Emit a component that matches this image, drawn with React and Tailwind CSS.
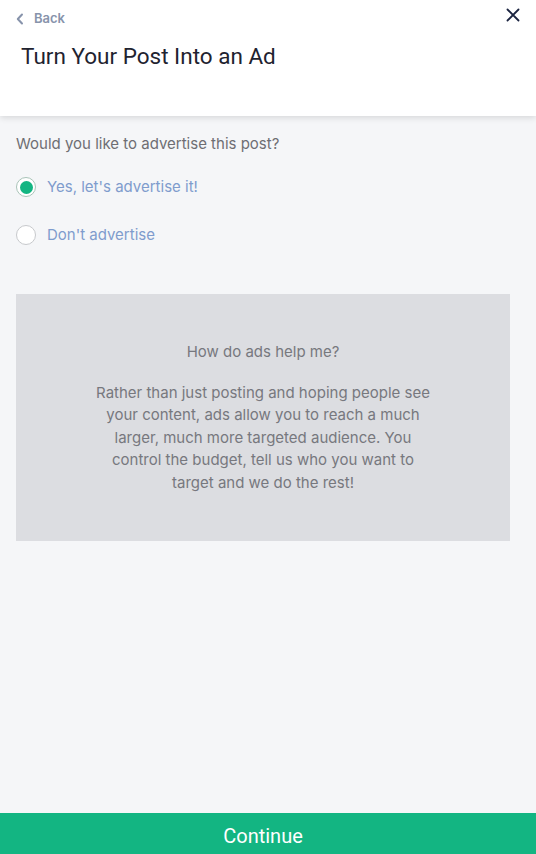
import { useState } from "react";

export default function App() {
  const [choice, setChoice] = useState("yes");

  return (
    <div className="flex flex-col h-[854px] w-[536px] bg-[#f5f6f8] font-['Inter',sans-serif] overflow-hidden">
      {/* HEADER */}
      <div className="relative bg-white h-[116px] shrink-0 shadow-[0_2px_6px_rgba(0,0,0,0.12)] z-10">
        <div className="flex items-center gap-[10px] pl-[16px] pt-[9px] text-[13px] font-semibold text-[#8793ab]">
          <svg width="8" height="12" viewBox="0 0 8 12" fill="none">
            <path d="M6 1.5 1.8 6 6 10.5" stroke="#8793ab" strokeWidth="2" strokeLinecap="round" strokeLinejoin="round" />
          </svg>
          <span>Back</span>
        </div>
        <button className="absolute right-[15px] top-[7px] p-[1px]">
          <svg width="14" height="14" viewBox="0 0 14 14" fill="none">
            <path d="M1.5 1.5 12.5 12.5M12.5 1.5 1.5 12.5" stroke="#1b2440" strokeWidth="1.8" strokeLinecap="round" />
          </svg>
        </button>
        <h1 className="pl-[21px] pt-[13px] text-[22.5px] leading-[28px] text-[#1f2330] font-['Roboto',sans-serif]">
          Turn Your Post Into an Ad
        </h1>
      </div>

      {/* BODY */}
      <div className="flex-1 px-[16px] pt-[18px]">
        <p className="text-[15px] leading-[20px] text-[#6e6e73]">Would you like to advertise this post?</p>

        <div className="mt-[23px] flex flex-col gap-[28px]">
          {[
            ["yes", "Yes, let's advertise it!"],
            ["no", "Don't advertise"],
          ].map(([val, label]) => (
            <label key={val} className="flex items-center gap-[11px] cursor-pointer" onClick={() => setChoice(val)}>
              <span className={`flex items-center justify-center w-[20px] h-[20px] rounded-full border bg-white ${choice === val ? "border-[#a9c4b8]" : "border-[#c7c9cc]"}`}>
                {choice === val && <span className="w-[13px] h-[13px] rounded-full bg-[#13b582]" />}
              </span>
              <span className="text-[15px] leading-[20px] text-[#7f9ccd]">{label}</span>
            </label>
          ))}
        </div>

        <div className="mt-[49px] h-[247px] w-[494px] bg-[#dcdde1] flex flex-col items-center justify-center text-center text-[15px] leading-[22.5px] text-[#77787e] px-[78px]">
          <p>How do ads help me?</p>
          <p className="mt-[18px]">
            Rather than just posting and hoping people see your content, ads allow you to reach a much larger, much more targeted audience. You control the budget, tell us who you want to target and we do the rest!
          </p>
        </div>
      </div>

      {/* FOOTER */}
      <button className="h-[41px] shrink-0 bg-[#13b582] pr-[10px] pt-[4px] text-white text-[20px] font-['Roboto',sans-serif]">
        Continue
      </button>
    </div>
  );
}
